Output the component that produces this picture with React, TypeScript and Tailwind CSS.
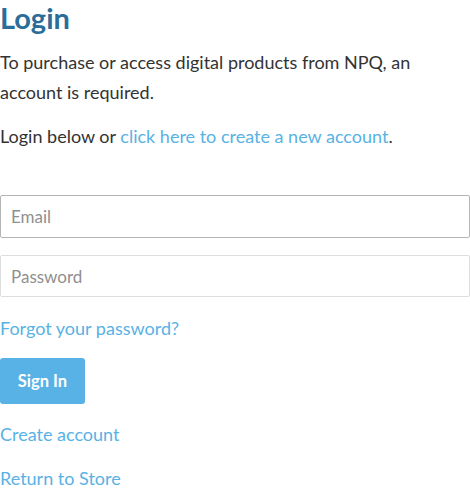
export default function App() {
  return (
    <div className="w-[470px] bg-white font-['Lato','Open_Sans',sans-serif] text-[18px] text-[#333333]">
      <h1 className="text-[29px] leading-[36px] font-bold text-[#2b6d99]">Login</h1>
      <p className="mt-[11px] leading-[30px]">
        To purchase or access digital products from NPQ, an account is required.
      </p>
      <p className="mt-[14px] leading-[30px]">
        Login below or{' '}
        <a href="#" className="text-[#58b2e5]">
          click here to create a new account
        </a>
        .
      </p>
      <form className="mt-[44px] flex flex-col">
        <input
          type="email"
          placeholder="Email"
          className="h-[43px] w-full rounded-[2px] border border-[#b5b5b5] px-[10px] text-[17px] placeholder:text-[#8f8f8f] outline-none"
        />
        <input
          type="password"
          placeholder="Password"
          className="mt-[17px] h-[42px] w-full rounded-[2px] border border-[#dddddd] px-[10px] text-[17px] placeholder:text-[#8f8f8f] outline-none"
        />
        <a href="#" className="mt-[19px] leading-[24px] text-[#58b2e5]">
          Forgot your password?
        </a>
        <button
          type="button"
          className="mt-[18px] h-[46px] w-[85px] rounded-[3px] bg-[#58b2e5] text-[16.5px] font-bold text-white"
        >
          Sign In
        </button>
        <a href="#" className="mt-[18px] leading-[24px] text-[#58b2e5]">
          Create account
        </a>
        <a href="#" className="mt-[20px] leading-[24px] text-[#58b2e5]">
          Return to Store
        </a>
      </form>
    </div>
  );
}
